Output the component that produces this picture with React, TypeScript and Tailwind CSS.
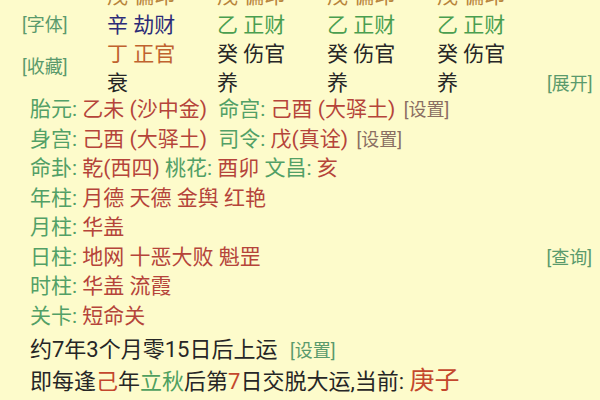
import React from "react";

type Seg = { t: string; c: string };

const G = "text-[#52a066]";
const R = "text-[#b5443a]";
const LINK = "text-[#8a6e62]";
const DARK = "text-[#262626]";

const pillars = [
  { top: "戊 偏印", gan: "辛 劫财", ganC: "text-[#2c2c78]", zhi: "丁 正官", zhiC: "text-[#c0622f]", state: "衰" },
  { top: "戊 偏印", gan: "乙 正财", ganC: "text-[#4a9e50]", zhi: "癸 伤官", zhiC: "text-[#262626]", state: "养" },
  { top: "戊 偏印", gan: "乙 正财", ganC: "text-[#4a9e50]", zhi: "癸 伤官", zhiC: "text-[#262626]", state: "养" },
  { top: "戊 偏印", gan: "乙 正财", ganC: "text-[#4a9e50]", zhi: "癸 伤官", zhiC: "text-[#262626]", state: "养" },
];

// a label that follows a value gets a little extra room, like the reference
const lines: { segs: Seg[]; link?: boolean; right?: string }[] = [
  {
    segs: [
      { t: "胎元: ", c: G },
      { t: "乙未 (沙中金) ", c: R },
      { t: "命宫: ", c: `${G} ml-[6px]` },
      { t: "己酉 (大驿土)", c: R },
    ],
    link: true,
  },
  {
    segs: [
      { t: "身宫: ", c: G },
      { t: "己酉 (大驿土) ", c: R },
      { t: "司令: ", c: `${G} ml-[6px]` },
      { t: "戊(真诠)", c: R },
    ],
    link: true,
  },
  {
    segs: [
      { t: "命卦: ", c: G },
      { t: "乾(西四) ", c: R },
      { t: "桃花: ", c: G },
      { t: "酉卯 ", c: R },
      { t: "文昌: ", c: G },
      { t: "亥", c: R },
    ],
  },
  { segs: [{ t: "年柱: ", c: G }, { t: "月德 天德 金舆 红艳", c: R }] },
  { segs: [{ t: "月柱: ", c: G }, { t: "华盖", c: R }] },
  { segs: [{ t: "日柱: ", c: G }, { t: "地网 十恶大败 魁罡", c: R }], right: "[查询]" },
  { segs: [{ t: "时柱: ", c: G }, { t: "华盖 流霞", c: R }] },
  { segs: [{ t: "关卡: ", c: G }, { t: "短命关", c: R }] },
];

export default function App() {
  return (
    <div
      className="relative h-[400px] w-[600px] overflow-hidden bg-[#fdfbcb] text-[21px]"
      style={{ fontFamily: 'Roboto, "Noto Sans CJK SC", sans-serif' }}
    >
      {/* four pillars, top row cut off by the screen edge */}
      <div className="-mt-[18px] flex">
        <div className="w-[107px] shrink-0 pl-[22px] pt-[28px] text-[18px] text-[#5a9a6c]">
          <div className="leading-[29px]">[字体]</div>
          <div className="mt-[13px] leading-[29px]">[收藏]</div>
        </div>
        <div className="grid w-[440px] shrink-0 grid-cols-4 leading-[29px]">
          {pillars.map((p, i) => (
            <div key={i} className="whitespace-pre">
              <div className="text-[#b8843c]">{p.top}</div>
              <div className={p.ganC}>{p.gan}</div>
              <div className={p.zhiC}>{p.zhi}</div>
              <div className={DARK}>{p.state}</div>
            </div>
          ))}
        </div>
        <div className="flex flex-1 justify-end whitespace-nowrap pr-[8px] pt-[87px] text-[18px] leading-[29px] text-[#5a9a6c]">
          [展开]
        </div>
      </div>

      <div className="-mt-[3px] pl-[30px]">
        {lines.map((l, i) => (
          <div key={i} className="flex items-center justify-between whitespace-pre pr-[8px] leading-[29.5px]">
            <div>
              {l.segs.map((s, j) => (
                <span key={j} className={s.c}>
                  {s.t}
                </span>
              ))}
              {l.link && <span className={`ml-[4px] text-[18px] ${LINK}`}>{" [设置]"}</span>}
            </div>
            {l.right && <span className="text-[18px] text-[#5a9a6c]">{l.right}</span>}
          </div>
        ))}

        <div className="mt-[4px] whitespace-pre text-[22px] leading-[30px]">
          <div className={DARK}>
            约7年3个月零15日后上运<span className="ml-[8px] text-[18px] text-[#5a9a6c]">{" [设置]"}</span>
          </div>
          <div className={DARK}>
            即每逢<span className="text-[#c4472d]">己</span>年<span className="text-[#4fa060]">立秋</span>后第
            <span className="text-[#c4472d]">7</span>日交脱大运,当前: <span className="text-[25px] text-[#c4472d]">庚子</span>
          </div>
        </div>
      </div>
    </div>
  );
}
